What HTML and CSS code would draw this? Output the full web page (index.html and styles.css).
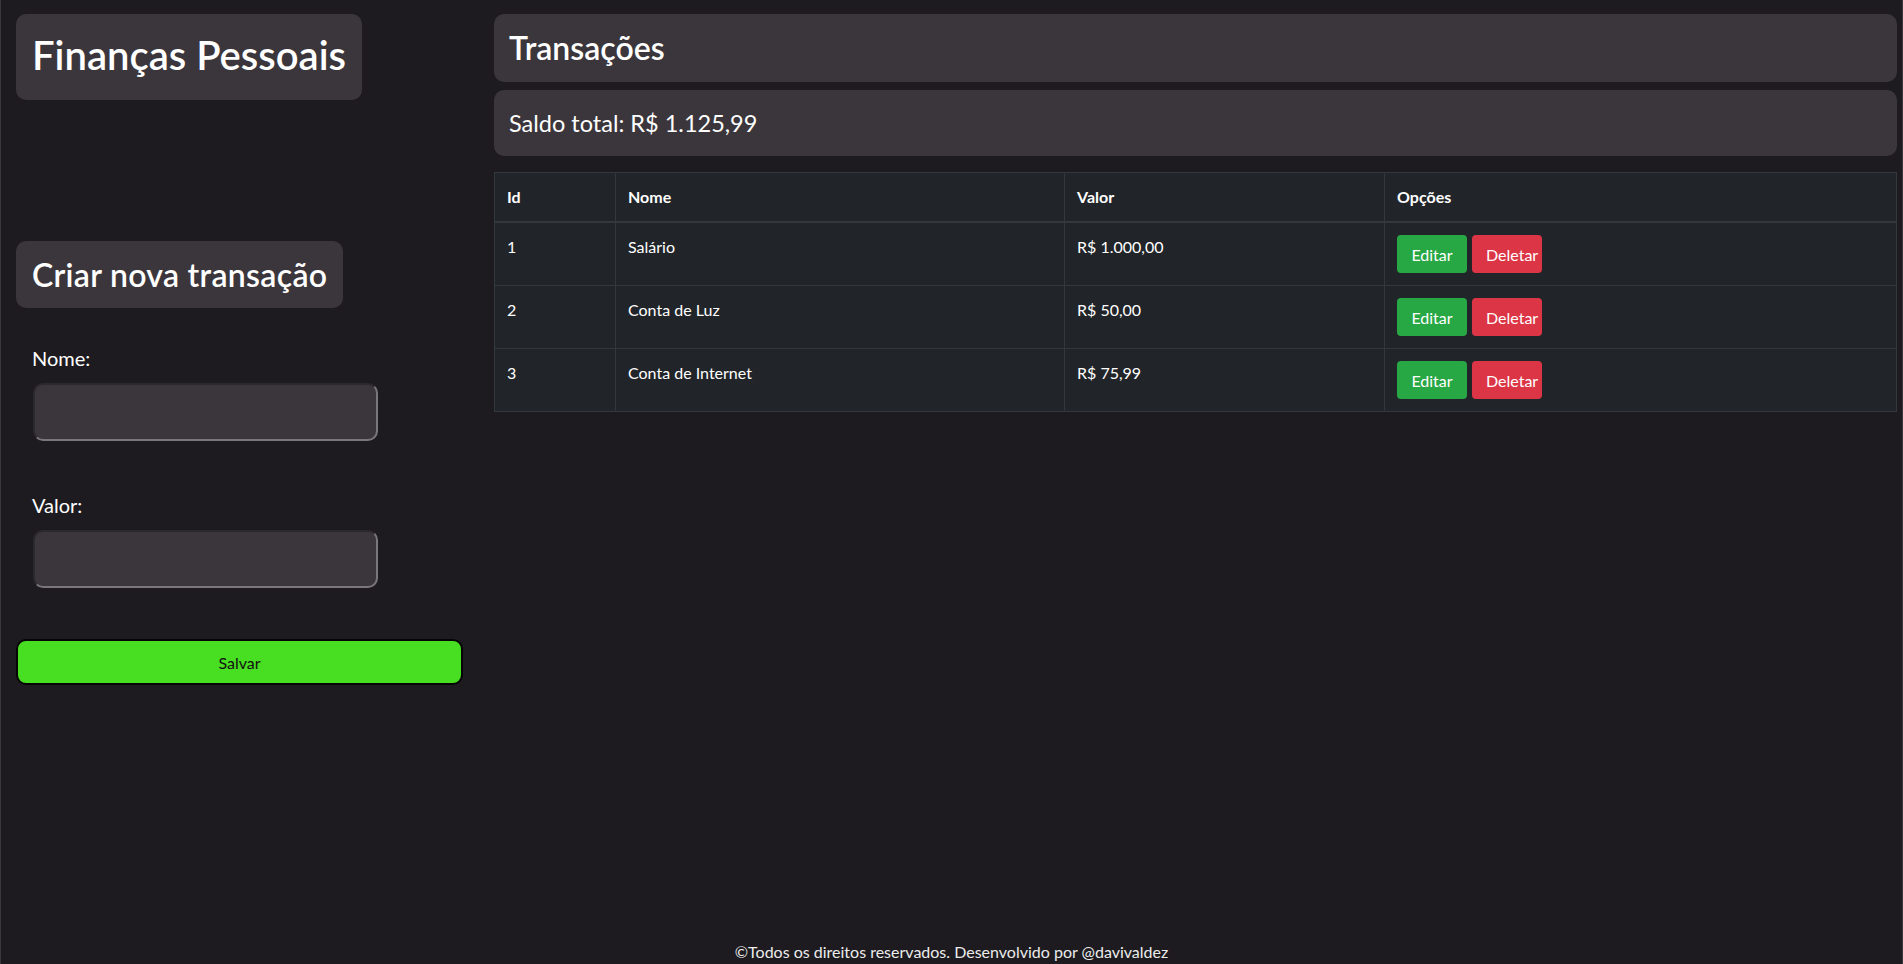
FILE: index.html
```html
<!DOCTYPE html>
<html lang="pt-BR">
<head>
<meta charset="utf-8">
<title>Finanças Pessoais</title>
<link rel="stylesheet" href="styles.css">
</head>
<body class="page">
  <main class="layout">
    <aside class="sidebar">
      <h1 class="panel app-title">Finanças Pessoais</h1>
      <h2 class="panel form-title">Criar nova transação</h2>
      <form class="tx-form">
        <label class="field-label" for="nome">Nome:</label>
        <input class="field-input" id="nome" type="text">
        <label class="field-label field-label-gap" for="valor">Valor:</label>
        <input class="field-input" id="valor" type="text">
        <button class="save-btn" type="button">Salvar</button>
      </form>
    </aside>
    <section class="content">
      <h2 class="panel content-title">Transações</h2>
      <div class="panel balance">Saldo total: R$ 1.125,99</div>
      <table class="tx-table">
        <colgroup>
          <col class="col-id">
          <col class="col-nome">
          <col class="col-valor">
          <col class="col-opcoes">
        </colgroup>
        <thead>
          <tr><th>Id</th><th>Nome</th><th>Valor</th><th>Opções</th></tr>
        </thead>
        <tbody>
          <tr>
            <td>1</td><td>Salário</td><td>R$ 1.000,00</td>
            <td><button class="btn btn-edit" type="button">Editar</button><button class="btn btn-delete" type="button">Deletar</button></td>
          </tr>
          <tr>
            <td>2</td><td>Conta de Luz</td><td>R$ 50,00</td>
            <td><button class="btn btn-edit" type="button">Editar</button><button class="btn btn-delete" type="button">Deletar</button></td>
          </tr>
          <tr>
            <td>3</td><td>Conta de Internet</td><td>R$ 75,99</td>
            <td><button class="btn btn-edit" type="button">Editar</button><button class="btn btn-delete" type="button">Deletar</button></td>
          </tr>
        </tbody>
      </table>
    </section>
  </main>
  <footer class="footer">©Todos os direitos reservados. Desenvolvido por @davivaldez</footer>
</body>
</html>
```

FILE: styles.css
```css
* { box-sizing: border-box; }

html, body { height: 100%; }

.page {
  margin: 0;
  height: 100vh;
  display: flex;
  flex-direction: column;
  background: #1d1b1f;
  color: #ffffff;
  font-family: "Lato", "Open Sans", sans-serif;
  border-left: 1px solid #3a383c;
  border-right: 1px solid #3a383c;
  overflow: hidden;
}

.layout {
  flex: 1;
  display: flex;
  gap: 31px;
  padding: 14px 5px 0 15px;
}

.sidebar {
  width: 447px;
  flex-shrink: 0;
  display: flex;
  flex-direction: column;
  align-items: flex-start;
}

.panel {
  background: #3b363c;
  border-radius: 10px;
  margin: 0;
  color: #ffffff;
}

.app-title {
  font-size: 40px;
  font-weight: 600;
  line-height: 48px;
  padding: 17px 16px 21px;
}

.form-title {
  margin-top: 141px;
  font-size: 32px;
  font-weight: 600;
  line-height: 39px;
  letter-spacing: 0.3px;
  padding: 14px 16px;
}

.tx-form {
  align-self: stretch;
  display: flex;
  flex-direction: column;
  align-items: flex-start;
  padding-top: 38px;
}

.field-label {
  font-size: 20px;
  line-height: 24px;
  padding-left: 16px;
}

.field-label-gap { margin-top: 52px; }

.field-input {
  margin: 13px 0 0 17px;
  width: 345px;
  height: 58px;
  background: #3b363c;
  border: 2px solid;
  border-color: #2c292d #7a777b #7a777b #2c292d;
  border-radius: 10px;
  color: #fff;
  font: inherit;
}

.save-btn {
  margin-top: 51px;
  align-self: stretch;
  height: 46px;
  background: #48de22;
  border: 2px solid #050505;
  border-radius: 10px;
  color: #111;
  font-family: inherit;
  font-size: 16px;
}

.content {
  flex: 1;
  display: flex;
  flex-direction: column;
}

.content-title {
  font-size: 32px;
  font-weight: 600;
  line-height: 38px;
  padding: 15px 15px;
}

.balance {
  margin-top: 8px;
  font-size: 23.5px;
  line-height: 30px;
  padding: 18px 15px;
}

.tx-table {
  margin-top: 16px;
  width: 100%;
  table-layout: fixed;
  border-collapse: collapse;
  background: #212529;
  color: #ffffff;
  font-size: 16px;
  border: 1px solid #32383e;
}

.col-id { width: 121px; }
.col-nome { width: 449px; }
.col-valor { width: 320px; }

.tx-table th,
.tx-table td {
  padding: 12px;
  line-height: 24px;
  text-align: left;
  vertical-align: top;
  border: 1px solid #32383e;
}

.tx-table th {
  font-weight: 700;
  border-bottom: 2px solid #32383e;
}

.btn {
  width: 70px;
  height: 38px;
  border: none;
  border-radius: 4px;
  color: #ffffff;
  font-family: inherit;
  font-size: 16px;
  padding: 0;
  vertical-align: top;
}

.btn-edit { background: #28a745; }

.btn-delete {
  background: #dc3545;
  margin-left: 5px;
  text-align: left;
  padding-left: 14px;
}

.footer {
  text-align: center;
  font-size: 16px;
  line-height: 24px;
  color: #ececec;
}
```
